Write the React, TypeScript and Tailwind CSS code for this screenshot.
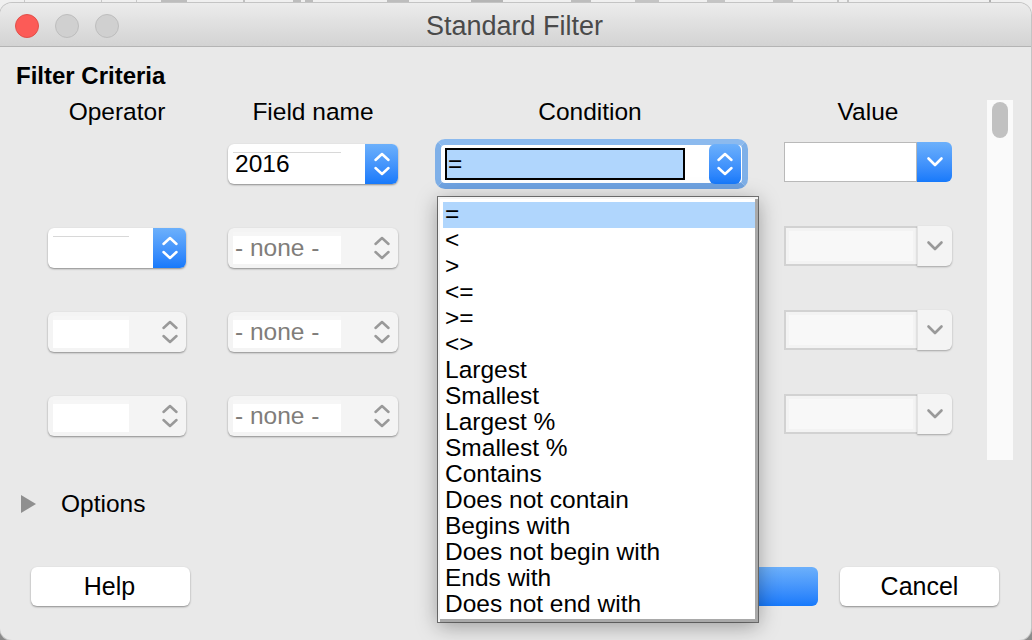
const F = "[font-family:'Liberation_Sans',Arial,sans-serif]";

function UpDown({ color }: { color: string }) {
  return (
    <svg width="18" height="28" viewBox="0 0 18 28" fill="none" stroke={color} strokeWidth="2.5" strokeLinecap="round" strokeLinejoin="round">
      <path d="M2.5 10 9 4 15.5 10" />
      <path d="M2.5 18 9 24 15.5 18" />
    </svg>
  );
}

function Down({ color }: { color: string }) {
  return (
    <svg width="18" height="12" viewBox="0 0 18 12" fill="none" stroke={color} strokeWidth="2.6" strokeLinecap="round" strokeLinejoin="round">
      <path d="M2.5 2.5 9 9 15.5 2.5" />
    </svg>
  );
}

function Spin({ width, text, active, inner }: { width: string; text?: string; active?: boolean; inner: string }) {
  return (
    <div className={`${width} h-[40px] flex rounded-[6px] shadow-[0_1px_2px_rgba(0,0,0,0.4)] overflow-hidden ${active ? "bg-white" : "bg-[#f4f4f4]"}`}>
      <div className="flex-1 min-w-0 pl-[5px]">
        <div className={`${inner} whitespace-nowrap pl-[2px] text-[24.5px] ${active ? "mt-[8px] h-[28px] border-t border-[#d8d8d8] leading-[22px] text-black" : "mt-[4px] h-[32px] border-t-[4px] border-[#f6f6f6] bg-white leading-[24px] text-[#807d7a]"}`}>
          {text}
        </div>
      </div>
      <div className={`w-[33px] flex items-center justify-center ${active ? "bg-gradient-to-b from-[#6cb0fb] to-[#1679fb]" : ""}`}>
        <UpDown color={active ? "#ffffff" : "#999999"} />
      </div>
    </div>
  );
}

function ValueBox({ active }: { active?: boolean }) {
  return (
    <div className="w-[168px] h-[40px] -mt-[2px] flex">
      {active ? (
        <div className="flex-1 h-[40px] border-[1.5px] border-[#b9b9b9] bg-white" />
      ) : (
        <div className="flex-1 h-[40px] border-2 border-r-0 border-[#d2d2d2] bg-[#f3f3f3] pl-[3px] py-[3px] pr-[4px]">
          <div className="h-full bg-[#f8f8f8]" />
        </div>
      )}
      <div className={`w-[35px] h-[40px] rounded-r-[6px] flex items-center justify-center ${active ? "bg-gradient-to-b from-[#6cb0fb] to-[#1679fb]" : "bg-[#f4f4f4] border-l border-[#e2e2e2] shadow-[0_1px_2px_rgba(0,0,0,0.3)]"}`}>
        <Down color={active ? "#ffffff" : "#999999"} />
      </div>
    </div>
  );
}

const items = ["=", "<", ">", "<=", ">=", "<>", "Largest", "Smallest", "Largest %", "Smallest %", "Contains", "Does not contain", "Begins with", "Does not begin with", "Ends with", "Does not end with"];

function Head({ children, className }: { children: string; className: string }) {
  return <div className={`text-center text-[24.5px] leading-[28px] ${className}`}>{children}</div>;
}

export default function App() {
  return (
    <div className={`w-[1032px] h-[640px] bg-gradient-to-b from-[#f0f0f0] via-[#eeeeee] to-[#8a8a8a] overflow-hidden pt-[3px] relative text-black ${F}`}>
      <div className="absolute top-0 left-0 w-full h-[4px] flex">
        <div className="ml-[24px] w-[1px] bg-[#c8c8c8]" />
        <div className="ml-[76px] w-[1px] bg-[#c8c8c8]" />
        <div className="ml-[34px] w-[1px] bg-[#c8c8c8]" />
        <div className="ml-[24px] w-[26px] bg-[#bdbdbd]" />
        <div className="ml-[56px] w-[2px] bg-[#c0c0c0]" />
        <div className="ml-[48px] w-[8px] bg-[#bdbdbd]" />
        <div className="ml-[4px] w-[8px] bg-[#bdbdbd]" />
        <div className="ml-[74px] w-[22px] bg-[#bdbdbd]" />
        <div className="ml-[62px] w-[32px] bg-[#b5b5b5]" />
        <div className="ml-[68px] w-[20px] bg-[#bdbdbd]" />
        <div className="ml-[44px] w-[24px] bg-[#c4c4c4]" />
        <div className="ml-[48px] w-[18px] bg-[#c4c4c4]" />
        <div className="ml-[48px] w-[20px] bg-[#c4c4c4]" />
        <div className="ml-[44px] w-[2px] bg-[#c4c4c4]" />
        <div className="ml-[8px] w-[2px] bg-[#c4c4c4]" />
        <div className="ml-[140px] w-[2px] bg-[#b0b0b0]" />
      </div>
      <div className="relative w-[1031px] h-[637px] rounded-[12px] overflow-hidden bg-[#e9e9e9] shadow-[0_0_0_1px_#c4c4c4] flex flex-col">
        <div className="h-[44px] shrink-0 bg-gradient-to-b from-[#ececec] to-[#d3d3d3] border-b border-[#b4b4b4] flex items-center relative pl-[15px] gap-[16px] pt-[2px]">
          <div className="w-[24px] h-[24px] rounded-full bg-[#fc5b57] border border-[#e0504a]" />
          <div className="w-[24px] h-[24px] rounded-full bg-[#d0d0d0] border border-[#bdbdbd]" />
          <div className="w-[24px] h-[24px] rounded-full bg-[#d0d0d0] border border-[#bdbdbd]" />
          <div className="absolute inset-0 flex items-center justify-center text-[27px] text-[#4a4a4a] pt-[4px] pr-[2px]">Standard Filter</div>
        </div>

        <div className="flex-1 relative pl-[16px] pt-[15px]">
          <div className="text-[24px] leading-[28px] font-bold">Filter Criteria</div>
          <div className="flex mt-[-4px]">
            <div className="w-[971px] flex flex-col">
              <div className="flex pt-[12px] pl-[32px]">
                <Head className="w-[138px]">Operator</Head>
                <Head className="w-[170px] ml-[42px]">Field name</Head>
                <Head className="w-[310px] ml-[37px]">Condition</Head>
                <Head className="w-[168px] ml-[39px]">Value</Head>
              </div>
              <div className="flex flex-col gap-[44px] mt-[18px]">
                <div className="flex h-[40px] pl-[32px]">
                  <div className="w-[138px]" />
                  <div className="ml-[42px]"><Spin width="w-[170px]" text="2016" active inner="w-[108px]" /></div>
                  <div className="ml-[37px] w-[313px] h-[50px] -mt-[5px] rounded-[10px] border-[6px] border-t-[#8cbaee] border-x-[#7fb0e8] border-b-[#6fa3e2] bg-white relative">
                    <div className="ml-[4px] mt-[3px] w-[240px] h-[32px] bg-[#b0d6fd] border-[2px] border-black text-[24.5px] leading-[28px] pl-[1px]">=</div>
                    <div className="absolute right-[1px] top-[-1px] bottom-[-1px] w-[32px] rounded-[6px] bg-gradient-to-b from-[#6cb0fb] to-[#1679fb] flex items-center justify-center">
                      <UpDown color="#ffffff" />
                    </div>
                  </div>
                  <div className="ml-[36px]"><ValueBox active /></div>
                </div>
                {[0, 1, 2].map((i) => (
                  <div key={i} className="flex h-[40px] pl-[32px]">
                    <Spin width="w-[138px]" active={i === 0} inner="w-[76px]" />
                    <div className="ml-[42px]"><Spin width="w-[170px]" text="- none -" inner="w-[108px]" /></div>
                    <div className="ml-[386px]"><ValueBox /></div>
                  </div>
                ))}
              </div>
            </div>
            <div className="w-[26px] h-[360px] mt-[14px] bg-[#fafafa] pt-[2px] flex justify-center">
              <div className="w-[16px] h-[36px] rounded-full bg-[#c1c1c1]" />
            </div>
          </div>

          <div className="flex items-center mt-[30px] pl-[5px]">
            <svg width="15" height="18" viewBox="0 0 15 18"><path d="M0 0 15 9 0 18Z" fill="#8f8f8f" /></svg>
            <span className="ml-[25px] text-[24.5px] leading-[28px]">Options</span>
          </div>

          <div className="flex mt-[49px] pl-[15px]">
            <button className="w-[159px] h-[39px] bg-white rounded-[6px] pr-[2px] shadow-[0_1px_2px_rgba(0,0,0,0.4)] text-[25px]">Help</button>
            <button className="ml-[491px] w-[137px] h-[39px] rounded-[6px] bg-gradient-to-b from-[#6cb0fb] to-[#1679fb]" aria-label="OK" />
            <button className="ml-[22px] w-[159px] h-[39px] bg-white rounded-[6px] shadow-[0_1px_2px_rgba(0,0,0,0.4)] text-[25px]">Cancel</button>
          </div>

          <div className="absolute left-[438px] top-[150px] w-[320px] h-[425px] bg-white border-t-[2px] border-l-[2px] border-[#f4f4f4] shadow-[0_4px_20px_rgba(0,0,0,0.35),inset_-3px_-3px_0_#a9a9a9,0_0_0_1px_#777] pl-[3px] pt-[3px]">
            {items.map((t, i) => (
              <div key={t} className={`w-[312px] h-[26px] pl-[2px] text-[24.5px] leading-[24px] whitespace-nowrap ${i === 0 ? "bg-[#b0d6fd]" : ""}`}>{t}</div>
            ))}
          </div>
        </div>
      </div>
    </div>
  );
}
